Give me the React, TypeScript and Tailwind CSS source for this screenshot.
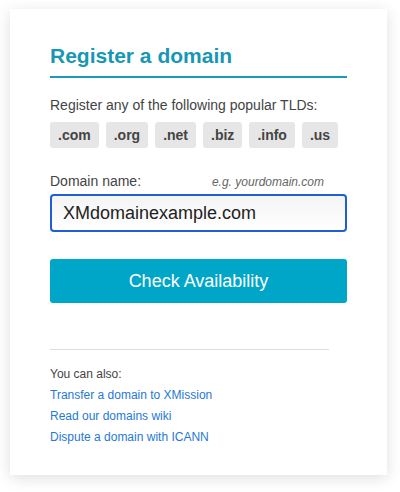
const tlds = [".com", ".org", ".net", ".biz", ".info", ".us"];

const links = [
  "Transfer a domain to XMission",
  "Read our domains wiki",
  "Dispute a domain with ICANN",
];

export default function App() {
  return (
    <div className="min-h-[492px] bg-white pt-[9px] pl-[10px] font-['Liberation_Sans',Arial,sans-serif]">
      <div className="w-[377px] bg-white px-[40px] pt-[35px] pb-[27px] shadow-[0_3px_14px_rgba(0,0,0,0.13)]">
        <h2 className="border-b-2 border-[#1a9bb8] pb-[8px] text-[21px] font-bold leading-[24px] text-[#1897b5]">
          Register a domain
        </h2>

        <p className="mt-[17px] text-[14px] leading-[20px] text-[#444]">
          Register any of the following popular TLDs:
        </p>
        <div className="mt-[7px] flex gap-[7px]">
          {tlds.map((t) => (
            <span
              key={t}
              className="flex h-[26px] items-center rounded-[3px] bg-[#e6e6e6] px-[8px] text-[14px] font-bold text-[#444]"
            >
              {t}
            </span>
          ))}
        </div>

        <div className="mt-[23px] flex items-baseline justify-between pr-[23px]">
          <label className="text-[14px] leading-[20px] text-[#444]">Domain name:</label>
          <span className="text-[12px] italic text-[#666]">e.g. yourdomain.com</span>
        </div>
        <div className="mt-[3px] flex h-[38px] items-center rounded-[4px] border-2 border-[#1f5fd6] bg-gradient-to-b from-[#f4f4f4] to-white px-[11px] text-[18px] text-[#222]">
          XMdomainexample.com
        </div>

        <button
          type="button"
          className="mt-[27px] flex h-[44px] w-full items-center justify-center rounded-[3px] bg-[#00a6c8] text-[18px] text-white"
        >
          Check Availability
        </button>

        <div className="mt-[46px] h-px w-[279px] bg-[#dddddd]" />

        <div className="mt-[14px] text-[12px] leading-[21px]">
          <p className="text-[#444]">You can also:</p>
          {links.map((l) => (
            <a key={l} href="#" className="block text-[#2579d6]">
              {l}
            </a>
          ))}
        </div>
      </div>
    </div>
  );
}
